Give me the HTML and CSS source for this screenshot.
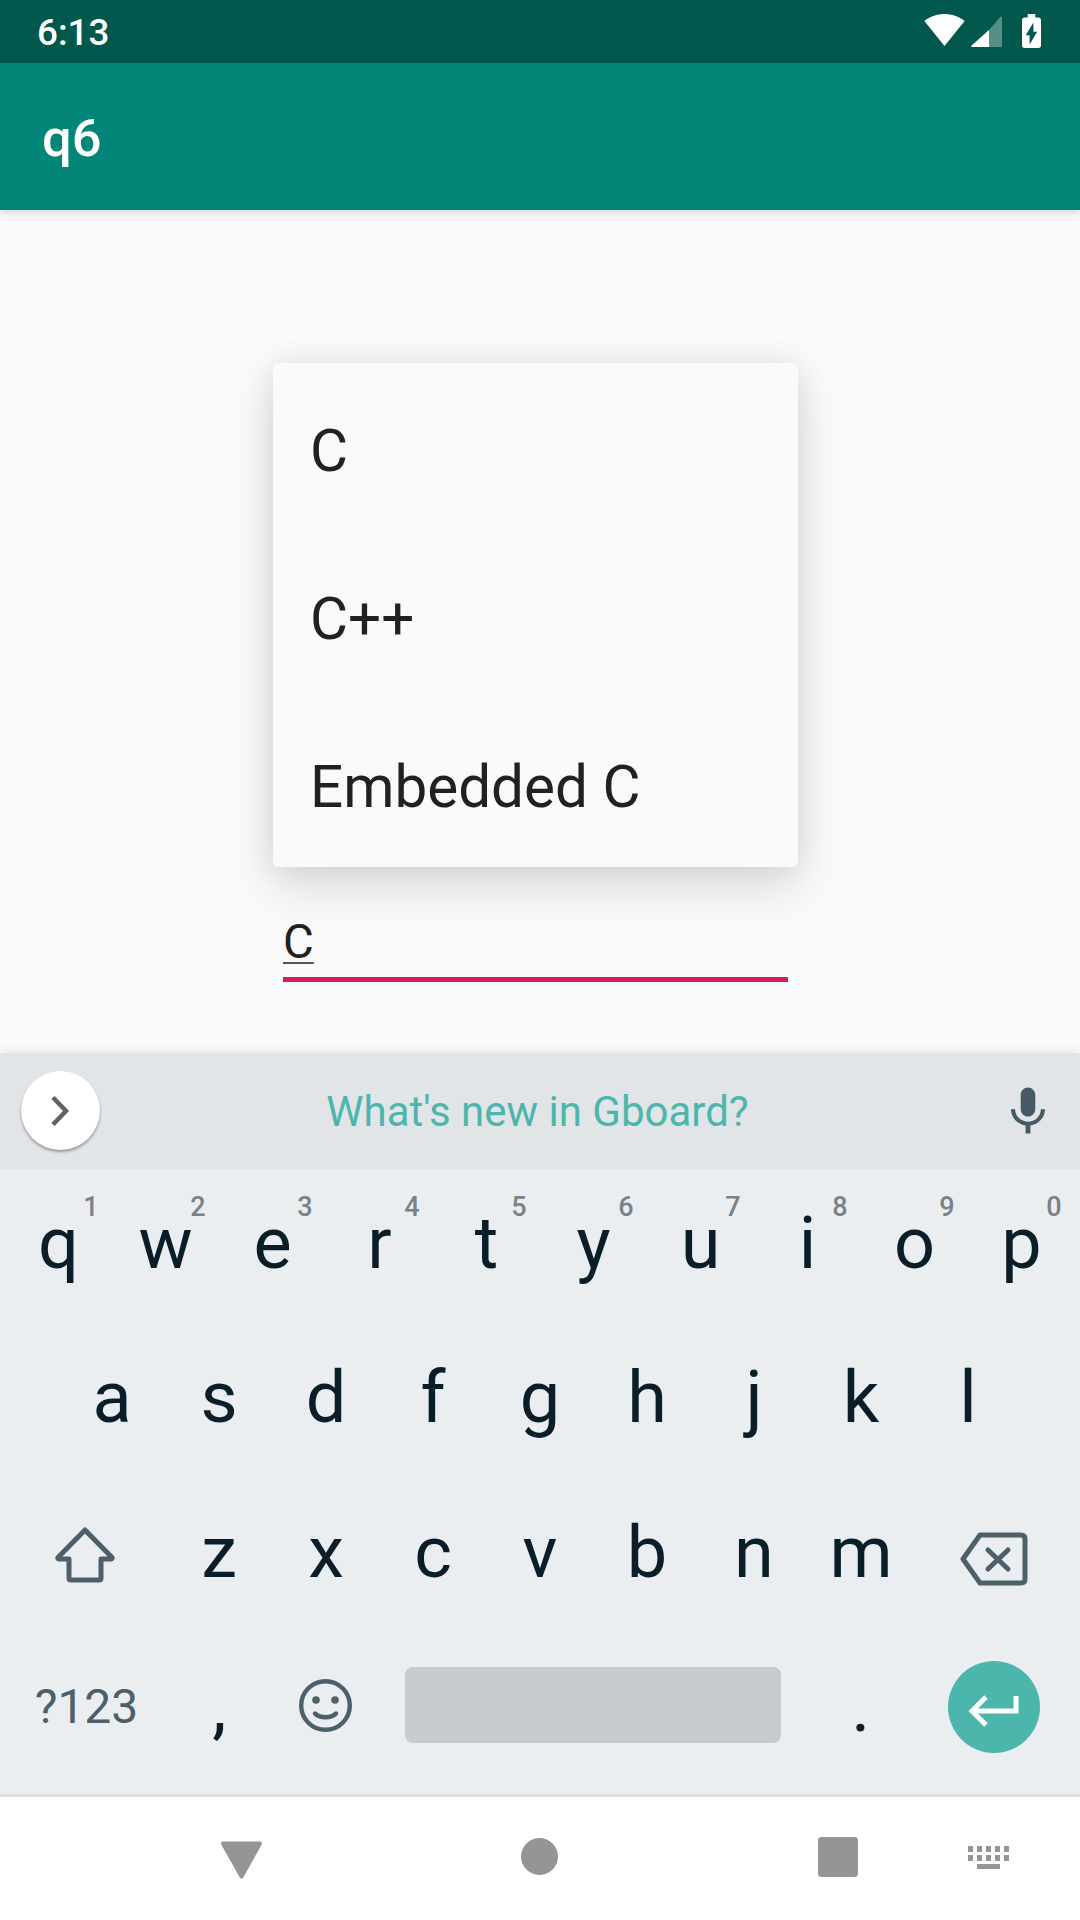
FILE: index.html
```html
<!DOCTYPE html>
<html lang="en">
<head>
<meta charset="utf-8">
<title>q6</title>
<link rel="stylesheet" href="styles.css">
</head>
<body>
<div class="screen">
  <header class="status-bar">
    <span class="time">6:13</span>
    <div class="status-icons">
      <svg class="icon-wifi" width="41" height="32" viewBox="0.36 3 23.28 18.5"><path fill="#fff" d="M12.01 21.49L23.64 7c-.45-.34-4.93-4-11.64-4C5.28 3 .81 6.66.36 7l11.63 14.49.01.01.01-.01z"/></svg>
      <svg class="icon-signal" width="31" height="31" viewBox="0 0 31 31"><path fill="#fff" fill-opacity=".33" d="M18 31V14L29.5 .8c.6-.7 1.5-.4 1.5.6V29.5c0 .9-.6 1.5-1.5 1.5z"/><path fill="#fff" d="M18 14L.6 29.6c-.7.6-.4 1.4.5 1.4H18z"/></svg>
      <svg class="icon-battery" width="19" height="34" viewBox="7 2 10 20" preserveAspectRatio="none"><path fill="#fff" fill-rule="evenodd" d="M15.67 4H14V2h-4v2H8.33C7.6 4 7 4.6 7 5.33v15.33C7 21.4 7.6 22 8.33 22h7.33c.74 0 1.34-.6 1.34-1.33V5.33C17 4.6 16.4 4 15.67 4zM11 20v-5.5H9L13 7v5.5h2L11 20z"/></svg>
    </div>
  </header>
  <div class="app-bar"><h1 class="app-title">q6</h1></div>
  <main class="content">
    <ul class="menu">
      <li class="menu-item">C</li>
      <li class="menu-item">C++</li>
      <li class="menu-item">Embedded C</li>
    </ul>
    <div class="field"><span class="field-text">C</span></div>
  </main>
  <section class="keyboard">
    <div class="suggest">
      <div class="suggest-btn">
        <svg width="20" height="32" viewBox="0 0 20 32"><path d="M3 2.5L16 16L3 29.5" fill="none" stroke="#5f6368" stroke-width="4.5"/></svg>
      </div>
      <span class="suggest-text">What's new in Gboard?</span>
      <svg class="mic" width="34" height="47" viewBox="5 2 14 19"><path fill="#455a64" d="M12 14c1.66 0 2.99-1.34 2.99-3L15 5c0-1.66-1.34-3-3-3S9 3.34 9 5v6c0 1.66 1.34 3 3 3zm5.3-3c0 3-2.54 5.1-5.3 5.1S6.7 14 6.7 11H5c0 3.41 2.72 6.23 6 6.72V21h2v-3.28c3.28-.48 6-3.3 6-6.72h-1.7z"/></svg>
    </div>
    <div class="keys">
      <div class="row">
        <div class="key">q<span class="hint">1</span></div>
        <div class="key">w<span class="hint">2</span></div>
        <div class="key">e<span class="hint">3</span></div>
        <div class="key">r<span class="hint">4</span></div>
        <div class="key">t<span class="hint">5</span></div>
        <div class="key">y<span class="hint">6</span></div>
        <div class="key">u<span class="hint">7</span></div>
        <div class="key">i<span class="hint">8</span></div>
        <div class="key">o<span class="hint">9</span></div>
        <div class="key">p<span class="hint">0</span></div>
      </div>
      <div class="row">
        <div class="key">a</div><div class="key">s</div><div class="key">d</div><div class="key">f</div><div class="key">g</div><div class="key">h</div><div class="key">j</div><div class="key">k</div><div class="key">l</div>
      </div>
      <div class="row">
        <div class="key key-wide key-shift">
          <svg width="60" height="56" viewBox="0 0 60 56"><path d="M30 3L3 30.5c-.5.8 0 1.5.8 1.5H14V51c0 1.2.8 2 2 2H44c1.2 0 2-.8 2-2V32H56.200c.8 0 1.300-.7.800-1.500z" fill="none" stroke="#4d5f69" stroke-width="5" stroke-linejoin="round"/></svg>
        </div>
        <div class="key">z</div><div class="key">x</div><div class="key">c</div><div class="key">v</div><div class="key">b</div><div class="key">n</div><div class="key">m</div>
        <div class="key key-wide key-back">
          <svg width="68" height="54" viewBox="0 0 68 54"><path d="M20 3H61c2.500 0 4 1.500 4 4V47c0 2.500-1.500 4-4 4H20L3 27z" fill="none" stroke="#4d5f69" stroke-width="5" stroke-linejoin="round"/><path d="M28 18L48 37M48 18L28 37" fill="none" stroke="#4d5f69" stroke-width="5" stroke-linecap="round"/></svg>
        </div>
      </div>
      <div class="row">
        <div class="key key-wide key-symbols">?123</div>
        <div class="key">,</div>
        <div class="key key-emoji">
          <svg width="53" height="53" viewBox="0 0 53 53"><circle cx="26.500" cy="26.500" r="24.300" fill="none" stroke="#4d5f69" stroke-width="4.400"/><circle cx="17" cy="21" r="3.800" fill="#4d5f69"/><circle cx="36" cy="21" r="3.800" fill="#4d5f69"/><path d="M16 34.500c5.500 5 15.500 5 21 0" fill="none" stroke="#4d5f69" stroke-width="4.400" stroke-linecap="round"/></svg>
        </div>
        <div class="space-slot"><div class="space-bar"></div></div>
        <div class="key">.</div>
        <div class="key key-wide">
          <div class="enter">
            <svg width="92" height="92" viewBox="0 0 92 92"><path d="M68 35V50H25" fill="none" stroke="#fff" stroke-width="5"/><path d="M38 36L24 50L38 64" fill="none" stroke="#fff" stroke-width="5"/></svg>
          </div>
        </div>
      </div>
    </div>
  </section>
  <nav class="nav-bar">
    <svg class="nav-back" width="43" height="38" viewBox="0 0 43 38"><path d="M3 2.500H40L21.500 35.500z" fill="#959595" stroke="#959595" stroke-width="4" stroke-linejoin="round"/></svg>
    <svg class="nav-home" width="37" height="37" viewBox="0 0 37 37"><circle cx="18.500" cy="18.500" r="18.500" fill="#959595"/></svg>
    <svg class="nav-recent" width="40" height="40" viewBox="0 0 40 40"><rect width="40" height="40" rx="3.500" fill="#959595"/></svg>
    <svg class="nav-kb" width="41" height="24" viewBox="0 0 41 24" fill="#959595"><rect x="0" y="0" width="5" height="6"/><rect x="9" y="0" width="5" height="6"/><rect x="18" y="0" width="5" height="6"/><rect x="27" y="0" width="5" height="6"/><rect x="36" y="0" width="5" height="6"/><rect x="0" y="9" width="5" height="6"/><rect x="9" y="9" width="5" height="6"/><rect x="18" y="9" width="5" height="6"/><rect x="27" y="9" width="5" height="6"/><rect x="36" y="9" width="5" height="6"/><rect x="9" y="18" width="23" height="5"/></svg>
  </nav>
</div>
</body>
</html>
```
FILE: styles.css
```css
* { box-sizing: border-box; }
html, body { margin: 0; padding: 0; }
body { font-family: Roboto, "Liberation Sans", sans-serif; background: #fafafa; }
.screen { width: 1080px; height: 1920px; display: flex; flex-direction: column; overflow: hidden; }

.status-bar { height: 63px; flex: none; background: #00574b; color: #fff; display: flex; align-items: center; justify-content: space-between; padding: 0 39px 0 37px; }
.time { font-size: 36.75px; font-weight: 500; line-height: 1; padding-top: 4px; }
.status-icons { display: flex; align-items: center; }
.status-icons svg { display: block; }
.icon-wifi { margin-bottom: 3px; }
.icon-signal { margin-left: 6px; }
.icon-battery { margin-left: 20px; margin-bottom: 1px; }

.app-bar { height: 147px; flex: none; background: #008577; display: flex; align-items: center; padding: 0 42px; box-shadow: 0 3px 8px rgba(0,0,0,.14); position: relative; z-index: 2; }
.app-title { margin: 0; color: #fff; font-size: 52.5px; font-weight: 500; line-height: 1; padding-top: 4px; }

.content { height: 843px; flex: none; padding: 153px 0 0 273px; background: #fafafa; }
.menu { list-style: none; margin: 0; padding: 0; width: 525px; height: 504px; background: #fafafa; border-radius: 5px; box-shadow: 0 20px 50px rgba(0,0,0,.13), 0 0 30px rgba(0,0,0,.08); }
.menu-item { height: 168px; display: flex; align-items: center; padding: 7px 0 0 37px; font-size: 58.4px; color: #212121; }
.field { width: 505px; height: 115px; margin-left: 10px; border-bottom: 5px solid #d81b60; }
.field-text { display: inline-block; margin-top: 47px; font-size: 47.25px; line-height: 56px; color: #212121; text-decoration: underline; text-decoration-color: #555; text-decoration-thickness: 2px; text-underline-offset: 4px; }

.keyboard { flex: 1; background: #ebeef1; display: flex; flex-direction: column; box-shadow: 0 -3px 8px rgba(0,0,0,.07); position: relative; z-index: 1; }
.suggest { height: 116px; flex: none; background: #e2e5e8; display: flex; align-items: center; padding: 0 35px 0 21px; justify-content: space-between; }
.suggest-btn { width: 79px; height: 79px; margin-bottom: 1px; border-radius: 50%; background: #fff; box-shadow: 0 2px 3px rgba(0,0,0,.35); display: flex; align-items: center; justify-content: center; padding-right: 2px; }
.suggest-text { font-size: 42px; color: #4db6ac; margin-right: 36px; }
.mic { display: block; margin-top: -2px; }

.keys { flex: 1; display: flex; flex-direction: column; padding-bottom: 7px; }
.row { height: 154.5px; flex: none; display: flex; justify-content: center; }
.key { width: 107px; flex: none; position: relative; display: flex; align-items: center; justify-content: center; font-size: 72px; color: #0a1e29; padding-bottom: 6px; }
.key svg { display: block; }
.key-wide { width: 158.500px; padding-bottom: 0; }
.key-shift { padding-right: 2px; }
.key-back { padding-top: 7px; }
.key-emoji { padding: 0 2px 8px 0; }
.key-symbols { font-size: 48px; color: #4d5f69; padding: 0 0 7px 0; }
.hint { position: absolute; top: 25px; left: 75px; width: 22px; text-align: center; font-size: 27px; font-weight: 500; line-height: 1; color: #788288; }
.space-slot { width: 427.500px; flex: none; display: flex; align-items: center; padding: 0 26px 0 25px; }
.space-bar { width: 100%; height: 76px; margin-bottom: 9px; background: #c7cbce; border-radius: 8px; }
.enter { width: 92px; height: 92px; border-radius: 50%; background: #4db6ac; margin-bottom: 5px; }
.enter svg { display: block; }

.nav-bar { height: 126px; flex: none; background: #fff; border-top: 3px solid #e0e0e0; display: flex; align-items: center; padding-left: 220px; }
.nav-back { margin-top: 2px; }
.nav-home { margin-left: 258px; margin-top: -4px; }
.nav-recent { margin-left: 260px; margin-top: -3px; }
.nav-kb { margin-left: 110px; margin-top: -2px; }
```
